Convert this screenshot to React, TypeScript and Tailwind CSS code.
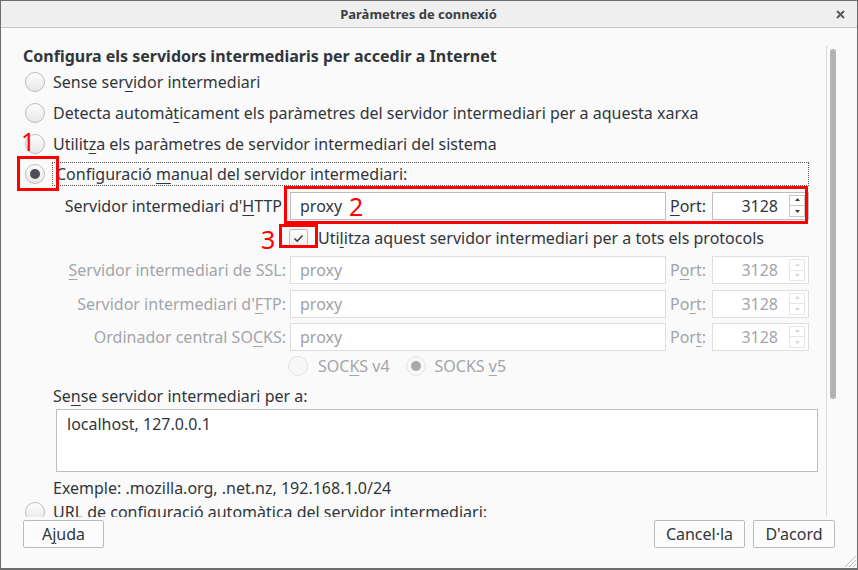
import React from "react";

const txt = "text-[#31363b]";
const dis = "text-[#a3a5a8]";

function Radio({ checked = false, disabled = false }: { checked?: boolean; disabled?: boolean }) {
  return (
    <span
      className={`flex h-[20px] w-[20px] shrink-0 items-center justify-center rounded-full border ${
        disabled ? "border-[#e2e2e2] bg-[#f7f7f7]" : "border-[#bcbcbc] bg-gradient-to-b from-[#fdfdfd] to-[#e8e8e8]"
      }`}
    >
      {checked && (
        <span className={`h-[10px] w-[10px] rounded-full ${disabled ? "bg-[#a8a9ac]" : "bg-[#4e5058]"}`} />
      )}
    </span>
  );
}

function U({ children }: { children: React.ReactNode }) {
  return <span className="underline decoration-1 underline-offset-[3px]">{children}</span>;
}

function Spin({ disabled = false }: { disabled?: boolean }) {
  const c = disabled ? "#d8d8d8" : "#3a3c42";
  const bd = disabled ? "border-[#e6e6e6]" : "border-[#c9c9c9]";
  return (
    <div className={`flex h-[28px] w-[97px] items-center border bg-white ${disabled ? "border-[#dedede]" : "border-[#bdbdbd]"}`}>
      <span className={`flex-1 pr-[11px] text-right ${disabled ? dis : txt}`}>3128</span>
      <div className="mr-[3px] flex h-[22px] w-[16px] flex-col">
        <div className={`flex flex-1 items-center justify-center border ${bd}`}>
          <svg width="7" height="6" viewBox="0 0 7 6">
            <path d="M3.5 1 L6 4 L1 4 Z" fill={c} />
          </svg>
        </div>
        <div className={`flex flex-1 items-center justify-center border border-t-0 ${bd}`}>
          <svg width="7" height="6" viewBox="0 0 7 6">
            <path d="M1 2 L6 2 L3.5 5 Z" fill={c} />
          </svg>
        </div>
      </div>
    </div>
  );
}

function ServerRow({
  label,
  disabled,
  port,
  h = "h-[33px]",
}: {
  label: React.ReactNode;
  disabled: boolean;
  port: React.ReactNode;
  h?: string;
}) {
  return (
    <div className={`flex ${h} items-center`}>
      <div className={`w-[267px] whitespace-nowrap pr-[4px] text-right ${disabled ? dis : txt}`}>{label}</div>
      <div
        className={`flex h-[28px] w-[376px] items-center border bg-white pl-[9px] ${
          disabled ? "border-[#dedede] text-[#9fa1a4]" : "border-[#bdbdbd] text-[#31363b]"
        }`}
      >
        proxy
      </div>
      <div className={`w-[46px] pl-[4px] ${disabled ? dis : txt}`}>{port}</div>
      <Spin disabled={disabled} />
    </div>
  );
}

function Button({ children, w }: { children: React.ReactNode; w: string }) {
  return (
    <div
      className={`flex h-[28px] ${w} items-center justify-center rounded-[2px] border border-[#bcbcbc] bg-[#fcfcfc] ${txt}`}
    >
      <span>{children}</span>
    </div>
  );
}

export default function App() {
  return (
    <div
      className="relative flex h-[570px] w-[858px] flex-col overflow-hidden border border-b-2 border-[#6d6d6d] bg-[#fafafa] text-[16px] leading-[20px]"
      style={{ fontFamily: '"Noto Sans", "Open Sans", sans-serif' }}
    >
      {/* title bar */}
      <div className="flex h-[27px] shrink-0 items-center border-b border-[#c6c6c6] bg-[#efefef]">
        <div className="flex-1 text-center text-[13px] font-bold text-[#3b3d42]">Paràmetres de connexió</div>
        <div className="flex w-[21px] items-center justify-start">
          <svg width="9" height="9" viewBox="0 0 9 9">
            <path d="M1 1 L8 8 M8 1 L1 8" stroke="#5a5c60" strokeWidth="2" />
          </svg>
        </div>
      </div>

      {/* content */}
      <div className="flex h-[489px] shrink-0">
        <div className="flex-1 overflow-hidden pl-[22px] pt-[19px]">
          <div className={`h-[19px] leading-[19px] font-bold ${txt}`}>
            Configura els servidors intermediaris per accedir a Internet
          </div>
          <div className="flex h-[31px] items-center pl-[2px]">
            <Radio />
            <span className={`ml-[8px] ${txt}`}>
              Sense ser<U>v</U>idor intermediari
            </span>
          </div>
          <div className="flex h-[31px] items-center pl-[2px]">
            <Radio />
            <span className={`ml-[8px] ${txt}`}>
              Detecta automà<U>t</U>icament els paràmetres del servidor intermediari per a aquesta xarxa
            </span>
          </div>
          <div className="flex h-[31px] items-center pl-[2px]">
            <Radio />
            <span className={`ml-[8px] ${txt}`}>
              Utilit<U>z</U>a els paràmetres de servidor intermediari del sistema
            </span>
          </div>
          <div className="flex h-[29px] items-center pl-[2px]">
            <Radio checked />
            <div className={`ml-[7px] flex h-[24px] w-[757px] items-center border border-dotted border-[#555] pl-[3px] ${txt}`}>
              <span>
                Configuració <U>m</U>anual del servidor intermediari:
              </span>
            </div>
          </div>

          <ServerRow
            h="h-[35px]"
            disabled={false}
            label={
              <span className="pr-[4px]">
                Servidor intermediari d'<U>H</U>TTP
              </span>
            }
            port={
              <>
                <U>P</U>ort:
              </>
            }
          />

          <div className="flex h-[30px] items-center pl-[266px]">
            <span className="flex h-[19px] w-[19px] items-center justify-center rounded-[2px] border border-[#bcbcbc] bg-gradient-to-b from-[#fdfdfd] to-[#ececec]">
              <svg width="11" height="9" viewBox="0 0 11 9">
                <path d="M1.5 4.5 L4.2 7.2 L9.5 1.5" fill="none" stroke="#3c3e44" strokeWidth="1.6" />
              </svg>
            </span>
            <span className={`ml-[10px] ${txt}`}>
              Uti<U>l</U>itza aquest servidor intermediari per a tots els protocols
            </span>
          </div>

          <ServerRow
            h="h-[34px]"
            disabled
            label={
              <>
                <U>S</U>ervidor intermediari de SSL:
              </>
            }
            port={
              <>
                P<U>o</U>rt:
              </>
            }
          />
          <ServerRow
            disabled
            label={
              <>
                Servidor intermediari d'<U>F</U>TP:
              </>
            }
            port={
              <>
                Po<U>r</U>t:
              </>
            }
          />
          <ServerRow
            disabled
            label={
              <>
                Ordinador central SO<U>C</U>KS:
              </>
            }
            port={
              <>
                Por<U>t</U>:
              </>
            }
          />

          <div className="flex h-[26px] items-center pl-[265px]">
            <Radio disabled />
            <span className={`ml-[10px] ${dis}`}>
              SOC<U>K</U>S v4
            </span>
            <span className="ml-[16px]">
              <Radio disabled checked />
            </span>
            <span className={`ml-[9px] ${dis}`}>
              SOCKS <U>v</U>5
            </span>
          </div>

          <div className={`pl-[30px] pt-[7px] ${txt}`}>
            Se<U>n</U>se servidor intermediari per a:
          </div>
          <div className={`ml-[33px] mt-[3px] h-[63px] w-[762px] border border-[#bdbdbd] bg-white pl-[10px] pt-[4px] ${txt}`}>
            localhost, 127.0.0.1
          </div>
          <div className={`mt-[6px] pl-[30px] ${txt}`}>Exemple: .mozilla.org, .net.nz, 192.168.1.0/24</div>
          <div className="mt-[4px] flex h-[20px] items-center pl-[2px]">
            <Radio />
            <span className={`ml-[8px] whitespace-nowrap ${txt}`}>
              URL de configuració automàtica del servidor intermediari:
            </span>
          </div>
        </div>

        {/* scrollbar */}
        <div className="w-[31px] shrink-0 pt-[18px]">
          <div className="h-full border-l border-[#dadada] pl-[3px] pt-[3px]">
            <div className="h-[350px] w-[6px] rounded-full bg-[#b3b3b7]" />
          </div>
        </div>
      </div>

      {/* buttons */}
      <div className="flex flex-1 items-start px-[22px] pt-[3px]">
        <Button w="w-[81px]">
          A<U>j</U>uda
        </Button>
        <div className="flex-1" />
        <Button w="w-[91px]">Cancel·la</Button>
        <div className="w-[8px]" />
        <Button w="w-[82px]">D'acord</Button>
      </div>

      {/* resize grip */}
      <svg className="absolute bottom-0 right-0" width="16" height="16" viewBox="0 0 16 16">
        <path d="M15 4 L4 15 M15 8 L8 15 M15 12 L12 15" stroke="#b8b8b8" strokeWidth="1" />
      </svg>

      {/* red annotations */}
      <div className="pointer-events-none absolute left-[16px] top-[155px] h-[35px] w-[42px] border-[3px] border-[#ff0000]" />
      <div className="pointer-events-none absolute left-[283px] top-[185px] h-[38px] w-[524px] border-[3px] border-[#ff0000]" />
      <div className="pointer-events-none absolute left-[278px] top-[223px] h-[24px] w-[39px] border-[3px] border-[#ff0000]" />
      <div
        className="pointer-events-none absolute left-[20px] top-[126px] text-[25px] leading-[28px] text-[#ff0000]"
        style={{ fontFamily: '"Noto Sans", sans-serif' }}
      >
        1
      </div>
      <div
        className="pointer-events-none absolute left-[348px] top-[191px] text-[25px] leading-[28px] text-[#ff0000]"
        style={{ fontFamily: '"Noto Sans", sans-serif' }}
      >
        2
      </div>
      <div
        className="pointer-events-none absolute left-[260px] top-[224px] text-[25px] leading-[28px] text-[#ff0000]"
        style={{ fontFamily: '"Noto Sans", sans-serif' }}
      >
        3
      </div>
    </div>
  );
}
